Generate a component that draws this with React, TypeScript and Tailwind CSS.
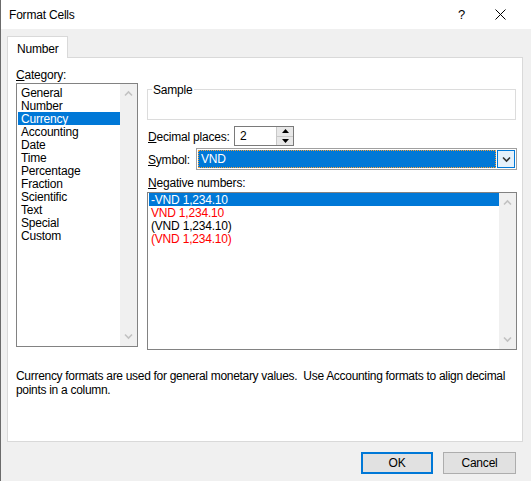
import React from "react";

const font = { fontFamily: '"Liberation Sans", Arial, sans-serif' };

function Chevron({ dir, color, size = 9 }: { dir: "up" | "down"; color: string; size?: number }) {
  return (
    <svg width={size} height={size} viewBox="0 0 9 9" className="block">
      {dir === "up" ? (
        <path d="M1 6.5 L4.5 3 L8 6.5" fill="none" stroke={color} strokeWidth="1.6" />
      ) : (
        <path d="M1 2.5 L4.5 6 L8 2.5" fill="none" stroke={color} strokeWidth="1.6" />
      )}
    </svg>
  );
}

function ScrollBar() {
  return (
    <div className="w-[17px] h-full bg-[#f0f0f0] flex flex-col justify-between items-center py-[5px]">
      <Chevron dir="up" color="#c2c2c2" />
      <Chevron dir="down" color="#c2c2c2" />
    </div>
  );
}

const categories = [
  "General",
  "Number",
  "Currency",
  "Accounting",
  "Date",
  "Time",
  "Percentage",
  "Fraction",
  "Scientific",
  "Text",
  "Special",
  "Custom",
];

const negatives: { t: string; c: string; sel?: boolean }[] = [
  { t: "-VND 1,234.10", c: "#ffffff", sel: true },
  { t: "VND 1,234.10", c: "#ff0000" },
  { t: "(VND 1,234.10)", c: "#000000" },
  { t: "(VND 1,234.10)", c: "#ff0000" },
];

export default function App() {
  return (
    <div
      className="w-[531px] h-[481px] bg-[#f0f0f0] text-[12px] tracking-[-0.2px] text-black border-l border-[#6b6b6b] flex flex-col overflow-hidden"
      style={font}
    >
      {/* Title bar */}
      <div className="h-[29px] bg-white flex items-center shrink-0">
        <div className="pl-[8px] text-[12px] text-black">Format Cells</div>
        <div className="flex-1" />
        <div className="text-[13px] mr-[30px] leading-none">?</div>
        <svg width="11" height="11" viewBox="0 0 11 11" className="mr-[25px]">
          <path d="M0.5 0.5 L10.5 10.5 M10.5 0.5 L0.5 10.5" stroke="#000" strokeWidth="1" />
        </svg>
      </div>

      {/* Tab */}
      <div className="pl-[6px] pt-[7px] flex shrink-0">
        <div className="w-[61px] h-[22px] bg-white border border-b-0 border-[#d9d9d9] pl-[9px] pt-[5px] leading-[14px] relative z-10 -mb-px">
          Number
        </div>
      </div>

      {/* Panel */}
      <div className="ml-[6px] w-[516px] h-[385px] bg-white border border-[#d9d9d9] shrink-0 flex flex-col">
        <div className="flex pl-[8px] pt-[9px]">
          {/* Left column */}
          <div className="w-[122px] flex flex-col">
            <div className="h-[16px] leading-[16px]">
              <span className="underline">C</span>ategory:
            </div>
            <div className="h-[264px] border border-[#828282] bg-white flex">
              <div className="flex-1 pt-[2px] pl-px">
                {categories.map((c) => (
                  <div
                    key={c}
                    className={
                      "h-[13px] leading-[14px] pl-[3px] whitespace-nowrap " +
                      (c === "Currency" ? "bg-[#0078d7] text-white" : "")
                    }
                  >
                    {c}
                  </div>
                ))}
              </div>
              <ScrollBar />
            </div>
          </div>

          {/* Right column */}
          <div className="ml-[9px] w-[370px] flex flex-col">
            <div className="mt-[22px] w-[369px] h-[31px] border border-[#dcdcdc] relative">
              <div className="absolute left-[4px] -top-[7px] bg-white px-px leading-[14px]">Sample</div>
            </div>

            <div className="mt-[6px] flex items-center h-[20px]">
              <div className="w-[87px] pl-px leading-[20px] pt-px">
                <span className="underline">D</span>ecimal places:
              </div>
              <div className="w-[60px] h-[20px] border border-[#7a7a7a] flex bg-white">
                <div className="flex-1 pl-[5px] leading-[19px]">2</div>
                <div className="w-[17px] flex flex-col border-l border-[#c8c8c8]">
                  <div className="flex-1 bg-[#e8e8e8] border-b border-[#c8c8c8] flex items-center justify-center">
                    <svg width="7" height="4" viewBox="0 0 7 4">
                      <path d="M0 4 L3.5 0 L7 4 Z" fill="#000" />
                    </svg>
                  </div>
                  <div className="flex-1 bg-[#e8e8e8] flex items-center justify-center">
                    <svg width="7" height="4" viewBox="0 0 7 4">
                      <path d="M0 0 L3.5 4 L7 0 Z" fill="#000" />
                    </svg>
                  </div>
                </div>
              </div>
            </div>

            <div className="mt-[2px] flex items-center h-[22px]">
              <div className="w-[49px] pl-px leading-[22px] pt-px">
                <span className="underline">S</span>ymbol:
              </div>
              <div className="w-[321px] h-[22px] border border-[#a0a0a0] bg-white flex p-px">
                <div className="flex-1 bg-[#0078d7] border border-dotted border-[#f7a13a] text-white leading-[17px] pl-[2px]">
                  VND
                </div>
                <div className="w-[18px] ml-px bg-[#e5f1fb] border border-[#0078d7] flex items-center justify-center">
                  <Chevron dir="down" color="#333" size={9} />
                </div>
              </div>
            </div>

            <div className="mt-[5px] h-[16px] leading-[16px] pl-px">
              <span className="underline">N</span>egative numbers:
            </div>
            <div className="mt-px h-[158px] border border-[#828282] bg-white flex">
              <div className="flex-1 pl-px">
                {negatives.map((n, i) => (
                  <div
                    key={i}
                    className={"h-[13px] leading-[14px] pl-[2px] whitespace-nowrap " + (n.sel ? "bg-[#0078d7]" : "")}
                    style={{ color: n.c }}
                  >
                    {n.t}
                  </div>
                ))}
              </div>
              <ScrollBar />
            </div>
          </div>
        </div>

        <div className="pl-[8px] pt-[19px] leading-[14px] w-[510px] tracking-[-0.3px]">
          Currency formats are used for general monetary values.&nbsp; Use Accounting formats to align decimal points in a
          column.
        </div>
      </div>

      {/* Buttons */}
      <div className="flex justify-end gap-[10px] pr-[15px] pt-[10px]">
        <div className="w-[72px] h-[22px] bg-[#e1e1e1] border-2 border-[#0078d7] flex items-center justify-center">
          OK
        </div>
        <div className="w-[73px] h-[22px] bg-[#e1e1e1] border border-[#adadad] flex items-center justify-center">
          Cancel
        </div>
      </div>
    </div>
  );
}
